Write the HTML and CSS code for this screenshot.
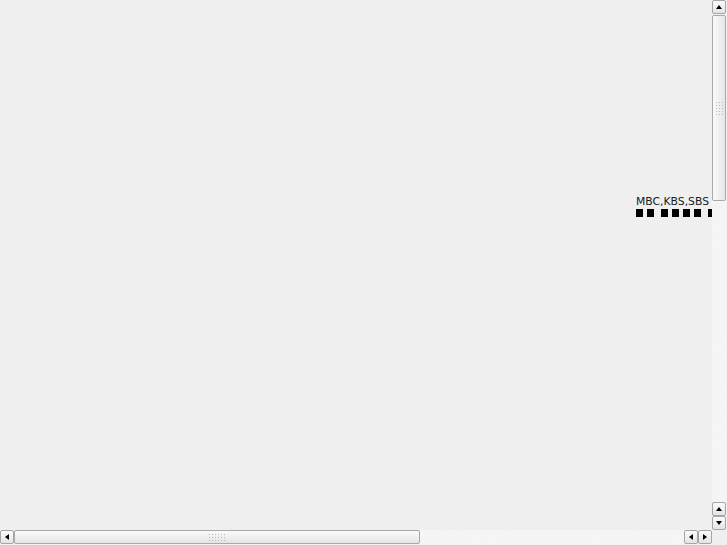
FILE: index.html
```html
<!DOCTYPE html>
<html>
<head>
<meta charset="utf-8">
<link rel="stylesheet" href="styles.css">
</head>
<body>
<div class="frame">
  <div class="view">
    <div class="label">
      <div class="line">MBC,KBS,SBS</div>
      <div class="tofu">
        <span class="word"><i></i><i></i></span>
        <span class="word"><i></i><i></i><i></i><i></i></span>
        <span class="word"><i></i></span>
      </div>
    </div>
  </div>
  <div class="vbar">
    <div class="btn"><span class="tri up"></span></div>
    <div class="vthumb"><span class="grip vgrip"></span></div>
    <div class="trough"></div>
    <div class="btn"><span class="tri up"></span></div>
    <div class="btn"><span class="tri down"></span></div>
  </div>
  <div class="hbar">
    <div class="btn"><span class="tri left"></span></div>
    <div class="hthumb"><span class="grip hgrip"></span></div>
    <div class="trough"></div>
    <div class="btn"><span class="tri left"></span></div>
    <div class="btn"><span class="tri right"></span></div>
  </div>
  <div class="corner"></div>
</div>
</body>
</html>
```

FILE: styles.css
```css
html, body {
  margin: 0;
  padding: 0;
  width: 727px;
  height: 545px;
  overflow: hidden;
  background: #efefef;
}

.frame {
  display: grid;
  grid-template-columns: 712px 15px;
  grid-template-rows: 530px 15px;
  width: 727px;
  height: 545px;
}

.view {
  overflow: hidden;
  background: #efefef;
  padding: 195px 0 0 636px;
  box-sizing: border-box;
}

.label {
  width: 200px;
  font-family: "DejaVu Sans", sans-serif;
  font-size: 10.8px;
  color: #1a1a1a;
}

.line {
  line-height: 13px;
  white-space: nowrap;
}

.tofu {
  display: flex;
  gap: 7px;
  margin-top: 1px;
}

.word {
  display: flex;
  gap: 4px;
}

.word i {
  display: block;
  width: 7px;
  height: 8px;
  background: #000;
}

.vbar {
  display: flex;
  flex-direction: column;
  background: #f2f2f2;
  padding-right: 1px;
}

.hbar {
  display: flex;
  flex-direction: row;
  background: #f2f2f2;
  padding-bottom: 1px;
}

.corner {
  background: #efefef;
}

.trough {
  flex: 1;
  background: repeating-linear-gradient(45deg, #f3f3f3 0 1px, #f6f6f6 1px 2px);
}

.btn {
  box-sizing: border-box;
  width: 14px;
  height: 14px;
  border: 1px solid #a5a5a5;
  border-radius: 2px;
  background: linear-gradient(#fbfbfb, #e4e4e4);
  display: flex;
  align-items: center;
  justify-content: center;
  flex: none;
}

.vthumb {
  box-sizing: border-box;
  width: 14px;
  height: 186px;
  margin-top: 1px;
  border: 1px solid #a8a8a8;
  border-radius: 2px;
  background: linear-gradient(90deg, #fafafa, #e6e6e6);
  display: flex;
  align-items: flex-start;
  justify-content: center;
  padding-top: 85px;
  flex: none;
}

.hthumb {
  box-sizing: border-box;
  width: 406px;
  height: 14px;
  border: 1px solid #a8a8a8;
  border-radius: 2px;
  background: linear-gradient(#fafafa, #e4e4e4);
  display: flex;
  align-items: center;
  padding-left: 193px;
  flex: none;
}

.grip {
  display: block;
  background-image: radial-gradient(circle, #b9b9b9 0.8px, transparent 1px);
  background-size: 3px 3px;
}

.vgrip { width: 9px; height: 15px; }
.hgrip { width: 18px; height: 9px; }

.tri {
  display: block;
  width: 0;
  height: 0;
  border-style: solid;
}

.tri.up { border-width: 0 3.5px 4px 3.5px; border-color: transparent transparent #000 transparent; }
.tri.down { border-width: 4px 3.5px 0 3.5px; border-color: #000 transparent transparent transparent; }
.tri.left { border-width: 3.5px 4px 3.5px 0; border-color: transparent #000 transparent transparent; }
.tri.right { border-width: 3.5px 0 3.5px 4px; border-color: transparent transparent transparent #000; }
```
